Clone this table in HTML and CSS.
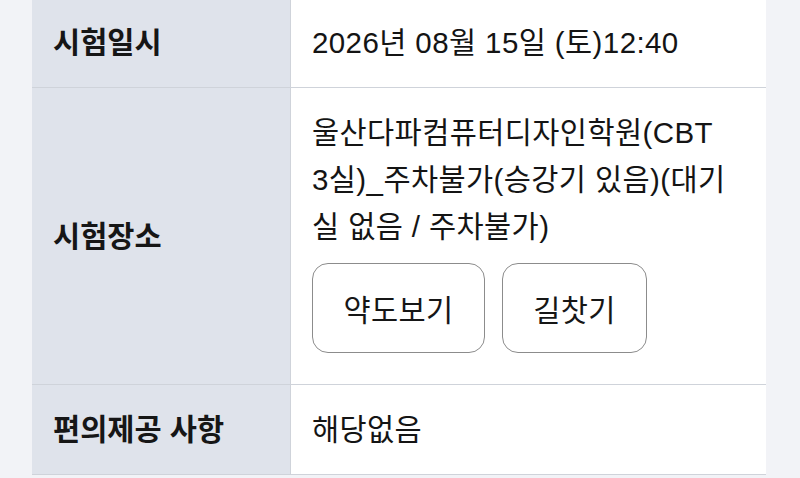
FILE: index.html
```html
<!DOCTYPE html>
<html lang="ko">
<head>
<meta charset="utf-8">
<link rel="stylesheet" href="styles.css">
</head>
<body>
<div class="page">
  <div class="info-table">
    <div class="label">시험일시</div>
    <div class="value">2026년 08월 15일 (토)12:40</div>

    <div class="label">시험장소</div>
    <div class="value">
      <p class="place">울산다파컴퓨터디자인학원(CBT<br>3실)_주차불가(승강기 있음)(대기<br>실 없음 / 주차불가)</p>
      <div class="actions">
        <button class="btn btn-map">약도보기</button>
        <button class="btn btn-route">길찻기</button>
      </div>
    </div>

    <div class="label">편의제공 사항</div>
    <div class="value">해당없음</div>
  </div>
</div>
</body>
</html>
```

FILE: styles.css
```css
* { box-sizing: border-box; }
html, body {
  margin: 0;
  padding: 0;
  background: #f2f3f7;
  height: 100%;
  overflow: hidden;
}
body {
  font-family: "Liberation Sans", "Noto Sans CJK KR", sans-serif;
  color: #141414;
}
.page {
  padding: 0 34px 0 32px;
}
.info-table {
  margin-top: -2px;
  display: grid;
  grid-template-columns: 259px 1fr;
  background: #fff;
}
.label {
  background: #dfe3eb;
  border-right: 1px solid #cfd3da;
  border-bottom: 1px solid #cfd3da;
  padding: 21px 10px 21px 21px;
  display: flex;
  align-items: center;
  font-size: 29.5px;
  line-height: 47px;
  font-weight: 700;
  color: #161616;
}
.value {
  border-bottom: 1px solid #cfd3da;
  padding: 21px 10px 21px 21px;
  font-size: 29.5px;
  line-height: 47px;
  font-weight: 400;
  letter-spacing: 0.4px;
}
.place {
  margin: 0;
  white-space: nowrap;
}
.actions {
  display: flex;
  gap: 17px;
  margin-top: 13px;
  margin-bottom: 10px;
}
.btn {
  font-family: inherit;
  font-size: 29.5px;
  letter-spacing: 0.4px;
  color: #161616;
  background: #fff;
  border: 1.5px solid #8c8c8c;
  border-radius: 16px;
  height: 90px;
  padding: 0;
  cursor: pointer;
}
.btn-map { width: 173px; }
.btn-route { width: 145px; }
```
